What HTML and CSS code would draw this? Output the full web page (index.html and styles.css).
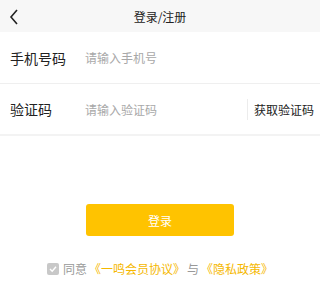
FILE: index.html
```html
<!DOCTYPE html>
<html lang="zh-CN">
<head>
    <meta charset="UTF-8">
    <meta name="viewport" content="width=device-width, initial-scale=1.0">
    <title>登录/注册</title>
    <link rel="stylesheet" href="styles.css">
</head>
<body>
    <div class="page">
        <div class="nav-bar">
            <span class="back-btn">
                <svg width="10" height="16" viewBox="0 0 10 16">
                    <path d="M8 1 L2 8 L8 15" fill="none" stroke="#222" stroke-width="1.6"/>
                </svg>
            </span>
            <span class="nav-title">登录/注册</span>
        </div>

        <div class="form">
            <div class="form-row">
                <span class="form-label">手机号码</span>
                <span class="form-input">请输入手机号</span>
            </div>
            <div class="form-row form-row-last">
                <span class="form-label">验证码</span>
                <span class="form-input">请输入验证码</span>
                <span class="code-btn">获取验证码</span>
            </div>
        </div>

        <div class="submit-wrap">
            <button class="submit-btn">登录</button>
        </div>

        <div class="agreement">
            <span class="check-box">
                <svg width="8" height="8" viewBox="0 0 8 8">
                    <path d="M1 4 L3.2 6.2 L7 1.8" fill="none" stroke="#fff" stroke-width="1.4"/>
                </svg>
            </span>
            <span>同意</span>
            <span class="link">《一鸣会员协议》</span>
            <span>与</span>
            <span class="link">《隐私政策》</span>
        </div>
    </div>
</body>
</html>
```

FILE: styles.css
```css
* {
    box-sizing: border-box;
}

body {
    margin: 0;
    font-family: "Noto Sans CJK SC", "Noto Sans", sans-serif;
    background: #fff;
}

.page {
    width: 320px;
    height: 298px;
    background: #fff;
}

.nav-bar {
    position: relative;
    height: 32px;
    background: #f7f7f7;
    display: flex;
    align-items: center;
    justify-content: center;
}

.back-btn {
    position: absolute;
    left: 9px;
    top: 9px;
    display: flex;
}

.nav-title {
    font-size: 12px;
    color: #222;
}

.form-row {
    display: flex;
    align-items: center;
    height: 52px;
    border-bottom: 1px solid #efefef;
    padding-left: 10px;
}

.form-row-last {
    border-bottom: 2px solid #f3f3f3;
}

.form-label {
    width: 75px;
    font-size: 14px;
    color: #222;
}

.form-input {
    flex: 1;
    font-size: 12px;
    color: #a8a8a8;
}

.code-btn {
    border-left: 1px solid #ececec;
    padding: 2px 6px 2px 6px;
    font-size: 12px;
    color: #222;
}

.submit-wrap {
    display: flex;
    justify-content: center;
    padding-top: 68px;
}

.submit-btn {
    width: 148px;
    height: 32px;
    border: none;
    border-radius: 3px;
    background: #ffc300;
    color: #fff;
    font-family: inherit;
    font-size: 12px;
}

.agreement {
    display: flex;
    align-items: center;
    justify-content: center;
    gap: 2px;
    margin-top: 24px;
    font-size: 12px;
    color: #999;
}

.check-box {
    width: 12px;
    height: 12px;
    border-radius: 2px;
    background: #c8c8c8;
    display: flex;
    align-items: center;
    justify-content: center;
    margin-right: 2px;
}

.link {
    color: #f5b800;
}
```
